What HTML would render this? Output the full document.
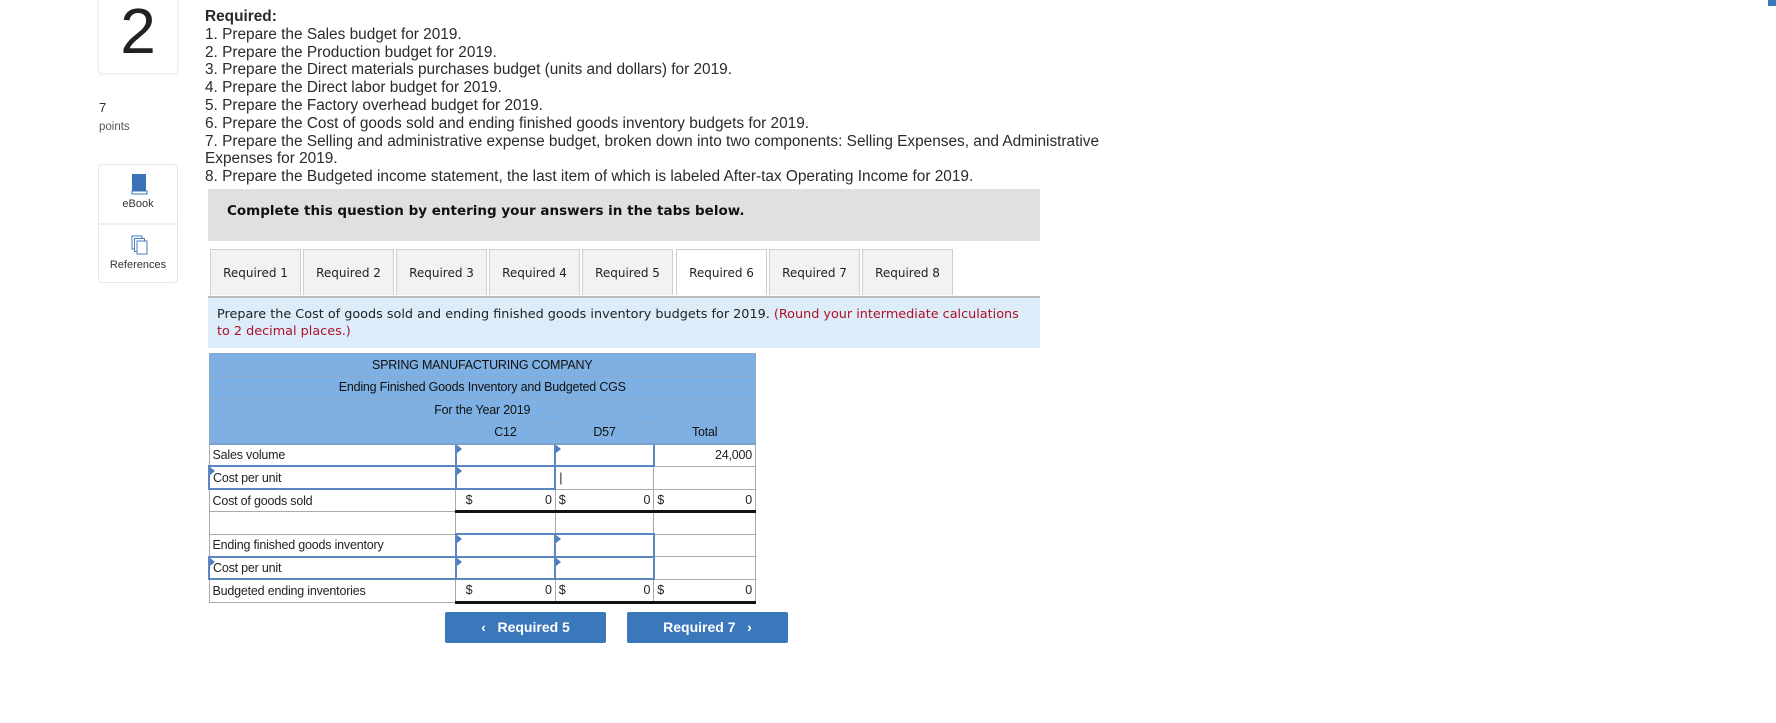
<!DOCTYPE html>
<html><head><meta charset="utf-8"><style>
*{margin:0;padding:0;box-sizing:border-box}
body{width:1776px;height:723px;background:#fff;position:relative;overflow:hidden;font-family:"Liberation Sans",Arial,sans-serif;color:#222}
.abs{position:absolute}
.qbox{left:98px;top:-8px;width:80px;height:82px;border:1px solid #eee;border-radius:4px;box-shadow:0 1px 2px #eee;font-size:64px;text-align:center;line-height:76px;color:#222}
.pts{left:99px;top:99px;font-size:13px;color:#333;line-height:18px}
.side{left:98px;top:164px;width:80px;height:119px;border:1px solid #e8e8e8;border-radius:4px}
.side .div{position:absolute;left:0;right:0;top:58px;border-top:2px solid #eee}
.side span{position:absolute;left:0;right:0;text-align:center;font-size:11px;color:#333}
.req{left:205px;top:8px;font-size:15.4px;line-height:17.8px;color:#2a2a2a;width:1000px}
.gray{left:208px;top:189px;width:832px;height:52px;background:#e0e0e0;font-family:"DejaVu Sans",sans-serif;font-weight:bold;font-size:13.5px;padding:14px 0 0 19px;color:#111}
.tab{position:absolute;top:249px;height:46px;width:91px;background:#f2f2f2;border:1px solid #d0d0d0;border-bottom:none;font-family:"DejaVu Sans",sans-serif;font-size:12px;text-align:center;line-height:46px;color:#222}
.tab.act{background:#fff;border-color:#ccc}
.inst{left:208px;top:296px;width:832px;height:52px;background:#dcecf8;border-top:2px solid #bbb;font-family:"DejaVu Sans",sans-serif;font-size:12.8px;line-height:17px;padding:8px 0 0 9px;color:#222}
.inst em{font-style:normal;color:#b0102a}
table{position:absolute;left:208px;top:353px;border-collapse:collapse;font-size:12.5px;width:548px;letter-spacing:-0.2px}
td{height:22.6px;border:1px solid #aaa;padding:0 3px;white-space:nowrap}
.h td{background:#7eb0e3;text-align:center;border-color:#8aa9cc;color:#111}
.h td.c{border-bottom:2px solid #7aa0cc}
.in{border:2px solid #5b86c0!important;position:relative}
.in:before{content:"";position:absolute;left:0;top:0;border-left:5px solid #4a7cc0;border-top:4px solid transparent;border-bottom:4px solid transparent}
.r{text-align:right}
.tot td.v{border-bottom:3px solid #111}
.btn{position:absolute;top:612px;height:31px;width:161px;background:#3a77bb;color:#fff;font-weight:bold;font-size:14px;text-align:center;line-height:31px;border-radius:2px}
</style></head><body>
<div class="abs" style="right:0;top:0;width:8px;height:6px;background:#3a77bb"></div>
<div class="abs qbox">2</div>
<div class="abs pts">7<br><span style="font-size:11.5px;color:#555">points</span></div>
<div class="abs side"><div class="div"></div>
<svg class="abs" style="left:32px;top:9px" width="17" height="21" viewBox="0 0 17 21"><rect x="1" y="0" width="14" height="18" fill="#3b73b9"/><rect x="1" y="17" width="15" height="3" fill="#fff" stroke="#3b73b9"/></svg>
<span style="top:33px">eBook</span>
<svg class="abs" style="left:32px;top:70px" width="18" height="21" viewBox="0 0 18 21"><rect x="1" y="1" width="10" height="13" fill="#fff" stroke="#4a7cc0"/><rect x="3.5" y="3.5" width="10" height="13" fill="#fff" stroke="#4a7cc0"/><rect x="6" y="6" width="10" height="13" fill="#fff" stroke="#4a7cc0"/></svg>
<span style="top:94px">References</span></div>
<div class="abs req"><b style="font-weight:bold">Required:</b><br>1. Prepare the Sales budget for 2019.<br>2. Prepare the Production budget for 2019.<br>3. Prepare the Direct materials purchases budget (units and dollars) for 2019.<br>4. Prepare the Direct labor budget for 2019.<br>5. Prepare the Factory overhead budget for 2019.<br>6. Prepare the Cost of goods sold and ending finished goods inventory budgets for 2019.<br>7. Prepare the Selling and administrative expense budget, broken down into two components: Selling Expenses, and Administrative<br>Expenses for 2019.<br>8. Prepare the Budgeted income statement, the last item of which is labeled After-tax Operating Income for 2019.</div>
<div class="abs gray">Complete this question by entering your answers in the tabs below.</div>
<div class="tab" style="left:210px">Required 1</div>
<div class="tab" style="left:303px">Required 2</div>
<div class="tab" style="left:396px">Required 3</div>
<div class="tab" style="left:489px">Required 4</div>
<div class="tab" style="left:582px">Required 5</div>
<div class="tab act" style="left:676px">Required 6</div>
<div class="tab" style="left:769px">Required 7</div>
<div class="tab" style="left:862px">Required 8</div>
<div class="abs inst">Prepare the Cost of goods sold and ending finished goods inventory budgets for 2019. <em>(Round your intermediate calculations<br>to 2 decimal places.)</em></div>
<table>
<colgroup><col style="width:247px"><col style="width:100px"><col style="width:99px"><col style="width:102px"></colgroup>
<tr class="h"><td colspan="4">SPRING MANUFACTURING COMPANY</td></tr>
<tr class="h"><td colspan="4">Ending Finished Goods Inventory and Budgeted CGS</td></tr>
<tr class="h"><td colspan="4">For the Year 2019</td></tr>
<tr class="h"><td class="c"></td><td class="c">C12</td><td class="c">D57</td><td class="c">Total</td></tr>
<tr><td>Sales volume</td><td class="in"></td><td class="in"></td><td class="r">24,000</td></tr>
<tr><td class="in">Cost per unit</td><td class="in"></td><td style="border:1px dotted #5b86c0">|</td><td></td></tr>
<tr class="tot"><td>Cost of goods sold</td><td class="v">&nbsp;&nbsp;$<span style="float:right">0</span></td><td class="v">$<span style="float:right">0</span></td><td class="v">$<span style="float:right">0</span></td></tr>
<tr><td></td><td></td><td></td><td></td></tr>
<tr><td>Ending finished goods inventory</td><td class="in"></td><td class="in"></td><td></td></tr>
<tr><td class="in">Cost per unit</td><td class="in"></td><td class="in"></td><td></td></tr>
<tr class="tot"><td>Budgeted ending inventories</td><td class="v">&nbsp;&nbsp;$<span style="float:right">0</span></td><td class="v">$<span style="float:right">0</span></td><td class="v">$<span style="float:right">0</span></td></tr>
</table>
<div class="btn" style="left:445px">&#8249;&nbsp;&nbsp; Required 5</div>
<div class="btn" style="left:627px">Required 7 &nbsp;&nbsp;&#8250;</div>
</body></html>
